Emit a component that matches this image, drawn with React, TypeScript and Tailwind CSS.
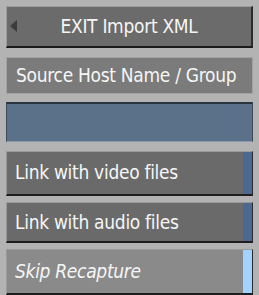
import React from "react";

const font = {
  fontFamily: '"DejaVu Sans Condensed", "DejaVu Sans", "Liberation Sans", sans-serif',
};

function ToggleRow({
  label,
  strip,
  bg,
  italic,
}: {
  label: string;
  strip: string;
  bg: string;
  italic?: boolean;
}) {
  return (
    <div
      className={`flex h-full border-t border-l border-[#9a9a9a] border-b-2 border-b-[#1e1e1e] border-r border-r-[#2a2a2a] ${bg}`}
    >
      <div className="flex flex-1 items-center pl-[8px]">
        <span
          className={`text-[19px] tracking-[-0.3px] leading-none text-[#f6f6f6] ${italic ? "italic" : ""}`}
        >
          {label}
        </span>
      </div>
      <div className={`w-[9px] ${strip}`} />
    </div>
  );
}

export default function App() {
  return (
    <div
      className="w-[259px] h-[295px] overflow-hidden bg-[#b3b3b3] px-[6px] pt-[6px] flex flex-col"
      style={font}
    >
      {/* exit button */}
      <div className="relative h-[42px] flex items-center justify-center bg-[#6b6b6b] border-t border-l border-[#9c9c9c] border-b-2 border-b-[#1a1a1a] border-r-2 border-r-[#2c2c2c]">
        <svg
          className="absolute left-[3px] top-[13px]"
          width="8"
          height="12"
          viewBox="0 0 8 12"
        >
          <polygon points="7,0 7,12 0,6" fill="#3c3c3c" />
        </svg>
        <span className="text-[19px] tracking-[-0.3px] leading-none text-[#f6f6f6]">
          EXIT Import XML
        </span>
      </div>

      {/* host field */}
      <div className="mt-[9px] h-[38px] flex items-center pl-[9px] bg-[#7b7b7b] border border-[#a2a2a2]">
        <span className="text-[19px] tracking-[-0.3px] leading-none text-[#f6f6f6] whitespace-nowrap">
          Source Host Name / Group
        </span>
      </div>

      {/* blue field */}
      <div className="mt-[8px] h-[40px] bg-[#5b7189] border-t-2 border-t-[#2a3440] border-l border-l-[#3c4a5a] border-r border-r-[#3c4a5a] border-b border-b-[#8799ad]" />

      <div className="mt-[9px] h-[45px]">
        <ToggleRow label="Link with video files" strip="bg-[#4d6890]" bg="bg-[#6a6a6a]" />
      </div>
      <div className="mt-[6px] h-[42px]">
        <ToggleRow label="Link with audio files" strip="bg-[#4d6890]" bg="bg-[#6a6a6a]" />
      </div>
      <div className="mt-[6px] h-[46px]">
        <ToggleRow
          label="Skip Recapture"
          strip="bg-[#a2d2ff]"
          bg="bg-[#8a8a8a]"
          italic
        />
      </div>
    </div>
  );
}
